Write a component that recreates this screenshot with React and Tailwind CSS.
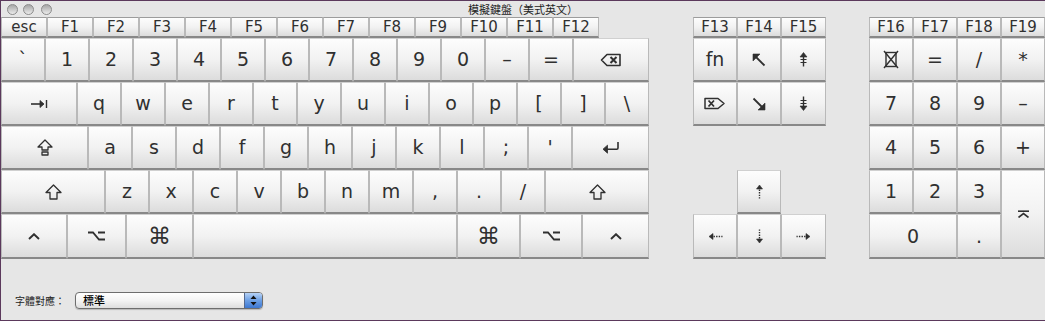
import React from 'react';

const ink = '#303030';

// key glyphs drawn as small svgs
const BackspaceIcon = () => (
  <svg width="22" height="14" viewBox="0 0 22 14" fill="none" stroke={ink}>
    <path d="M1.5 7 7 1.5h13v11H7z" strokeWidth="1.6" strokeLinejoin="round" />
    <path d="m10.5 4 6 6m0-6-6 6" strokeWidth="2" />
  </svg>
);

const TabIcon = () => (
  <svg width="18" height="10" viewBox="0 0 18 10" fill="none" stroke={ink}>
    <path d="M1 5h10" strokeWidth="1.6" />
    <path d="M10 1.5 14 5l-4 3.5z" fill={ink} strokeWidth="0.8" />
    <path d="M16.5 1v8" strokeWidth="1.4" />
  </svg>
);

const CapsIcon = () => (
  <svg width="16" height="17" viewBox="0 0 16 17" fill="none" stroke={ink} strokeWidth="1.3" strokeLinejoin="round">
    <path d="M8 1 15 8h-4v3H5V8H1z" />
    <rect x="5" y="13" width="6" height="3" />
  </svg>
);

const ShiftIcon = () => (
  <svg width="17" height="16" viewBox="0 0 17 16" fill="none" stroke={ink} strokeWidth="1.3" strokeLinejoin="round">
    <path d="M8.5 1 16 8.5h-4V15H5V8.5H1z" />
  </svg>
);

const ReturnIcon = () => (
  <svg width="18" height="13" viewBox="0 0 18 13" fill="none" stroke={ink}>
    <path d="M16 1v6q0 1.2-1.2 1.2H4" strokeWidth="1.6" />
    <path d="M5.5 4.2 1 8.2l4.5 4z" fill={ink} strokeWidth="0.8" strokeLinejoin="round" />
  </svg>
);

const CtrlIcon = () => (
  <svg width="12" height="7" viewBox="0 0 12 7" fill="none" stroke={ink} strokeWidth="1.9">
    <path d="M1 6 6 1.2 11 6" />
  </svg>
);

const OptionIcon = () => (
  <svg width="19" height="10" viewBox="0 0 19 10" fill="none" stroke={ink} strokeWidth="1.8">
    <path d="M1 1.5h5l6 7h6M11 1.5h7" />
  </svg>
);

const HomeIcon = ({ flip = false }) => (
  <svg width="14" height="14" viewBox="0 0 14 14" fill="none" stroke={ink} style={flip ? { transform: 'rotate(180deg)' } : undefined}>
    <path d="M3 3l9.5 9.5" strokeWidth="1.8" />
    <path d="M1 1h7L1 8z" fill={ink} strokeWidth="0.6" />
  </svg>
);

const PageIcon = ({ down = false }) => (
  <svg width="9" height="15" viewBox="0 0 9 15" fill="none" stroke={ink} style={down ? { transform: 'rotate(180deg)' } : undefined}>
    <path d="M4.5 3.5V14.5" strokeWidth="1.4" />
    <path d="M1 5 4.5 0.5 8 5z" fill={ink} strokeWidth="0.6" />
    <path d="M1.5 7.5h6M1.5 10.5h6" strokeWidth="1.2" />
  </svg>
);

const FwdDeleteIcon = () => (
  <svg width="22" height="13" viewBox="0 0 22 13" fill="none" stroke={ink}>
    <path d="M1 1.5h13l6 5-6 5H1z" strokeWidth="1.5" strokeLinejoin="round" />
    <path d="m4.5 3.5 5.5 6m0-6-5.5 6" strokeWidth="1.8" />
  </svg>
);

const ClearIcon = () => (
  <svg width="16" height="19" viewBox="0 0 16 19" fill="none" stroke={ink} strokeWidth="1.4">
    <rect x="3" y="2.5" width="10" height="14" />
    <path d="M1 1l14 17M15 1 1 18" />
  </svg>
);

const ArrowIcon = ({ dir }) => {
  const rot = { up: 0, right: 90, down: 180, left: 270 }[dir];
  return (
    <svg width="15" height="15" viewBox="0 0 15 15" fill="none" stroke={ink} style={{ transform: `rotate(${rot}deg)` }}>
      <path d="M4.5 5 7.5 1l3 4z" fill={ink} strokeWidth="0.6" />
      <path d="M7.5 5.5V14.5" strokeWidth="1.4" strokeDasharray="1.4 1.2" />
    </svg>
  );
};

const EnterIcon = () => (
  <svg width="13" height="8" viewBox="0 0 13 8" fill="none" stroke={ink} strokeWidth="1.6">
    <path d="M1 1.2h11" />
    <path d="M1.5 7.5 6.5 3.6l5 3.9" />
  </svg>
);

const Key = ({ w = 'w-[44px]', fn = false, children, className = '' }) => (
  <div
    className={`${w} h-full shrink-0 box-border flex items-center justify-center border-x border-[#b9b9b9] border-b-2 border-b-[#888888] border-t ${
      fn ? 'border-t-[#9c9c9c] text-[15px]' : 'border-t-[#d0d0d0] text-[19px]'
    } bg-linear-to-b from-[#fdfdfd] via-[#f2f2f2] to-[#dcdcdc] text-[#303030] leading-none ${className}`}
  >
    {children}
  </div>
);

const fnKeys = ['esc', 'F1', 'F2', 'F3', 'F4', 'F5', 'F6', 'F7', 'F8', 'F9', 'F10', 'F11', 'F12'];
const numRow = ['1', '2', '3', '4', '5', '6', '7', '8', '9', '0', '–', '='];
const qRow = ['q', 'w', 'e', 'r', 't', 'y', 'u', 'i', 'o', 'p', '[', ']', '\\'];
const aRow = ['a', 's', 'd', 'f', 'g', 'h', 'j', 'k', 'l', ';', "'"];
const zRow = ['z', 'x', 'c', 'v', 'b', 'n', 'm', ',', '.', '/'];

const App = () => {
  return (
    <div
      className="w-[1045px] h-[321px] box-border border-l border-t border-b border-[#5b395c] bg-[#e6e6e6] flex flex-col overflow-hidden"
      style={{ fontFamily: '"DejaVu Sans", "Noto Sans CJK TC", sans-serif' }}
    >
      {/* Title bar */}
      <div className="h-[16px] shrink-0 grid grid-cols-[1fr_auto_1fr] items-center">
        <div className="flex items-center">
          <span className="ml-[6px] w-[11px] h-[11px] rounded-full border border-[#8c8c8c] bg-linear-to-b from-[#a6a6a6] to-[#ececec]" />
          <span className="ml-[5px] w-[11px] h-[11px] rounded-full border border-[#8c8c8c] bg-linear-to-b from-[#a6a6a6] to-[#ececec]" />
          <span className="ml-[7px] w-[11px] h-[11px] rounded-full border border-[#8c8c8c] bg-linear-to-b from-[#a6a6a6] to-[#ececec]" />
        </div>
        <div
          className="text-[11px] leading-none text-[#1e1e1e] pt-[1px]"
          style={{ fontFamily: '"Noto Sans CJK TC", sans-serif' }}
        >
          模擬鍵盤（美式英文）
        </div>
        <div />
      </div>

      {/* Keyboard */}
      <div className="flex shrink-0">
        {/* Main block */}
        <div className="w-[648px] flex flex-col">
          <div className="h-[21px] flex">
            {fnKeys.map((k) => (
              <Key key={k} w="w-[46px]" fn>{k}</Key>
            ))}
          </div>
          <div className="h-[44px] flex">
            <Key>`</Key>
            {numRow.map((k) => (
              <Key key={k}>{k}</Key>
            ))}
            <Key w="w-[76px]"><BackspaceIcon /></Key>
          </div>
          <div className="h-[44px] flex">
            <Key w="w-[76px]"><TabIcon /></Key>
            {qRow.map((k) => (
              <Key key={k}>{k}</Key>
            ))}
          </div>
          <div className="h-[44px] flex">
            <Key w="w-[87px]"><CapsIcon /></Key>
            {aRow.map((k) => (
              <Key key={k}>{k}</Key>
            ))}
            <Key w="w-[77px]"><ReturnIcon /></Key>
          </div>
          <div className="h-[44px] flex">
            <Key w="w-[104px]"><ShiftIcon /></Key>
            {zRow.map((k) => (
              <Key key={k}>{k}</Key>
            ))}
            <Key w="w-[104px]"><ShiftIcon /></Key>
          </div>
          <div className="h-[45px] flex">
            <Key w="w-[66px]"><CtrlIcon /></Key>
            <Key w="w-[59px]"><OptionIcon /></Key>
            <Key w="w-[67px]" className="text-[23px]">⌘</Key>
            <Key w="w-[264px]" />
            <Key w="w-[63px]" className="text-[23px]">⌘</Key>
            <Key w="w-[62px]"><OptionIcon /></Key>
            <Key w="w-[67px]"><CtrlIcon /></Key>
          </div>
        </div>

        {/* Navigation block */}
        <div className="ml-[44px] w-[133px] grid grid-cols-[44px_44px_45px] grid-rows-[21px_44px_44px_44px_44px_45px]">
          <Key w="w-full" fn>F13</Key>
          <Key w="w-full" fn>F14</Key>
          <Key w="w-full" fn>F15</Key>
          <Key w="w-full">fn</Key>
          <Key w="w-full"><HomeIcon /></Key>
          <Key w="w-full"><PageIcon /></Key>
          <Key w="w-full"><FwdDeleteIcon /></Key>
          <Key w="w-full"><HomeIcon flip /></Key>
          <Key w="w-full"><PageIcon down /></Key>
          <Key w="w-full" className="col-start-2 row-start-5"><ArrowIcon dir="up" /></Key>
          <Key w="w-full" className="col-start-1 row-start-6"><ArrowIcon dir="left" /></Key>
          <Key w="w-full" className="col-start-2 row-start-6"><ArrowIcon dir="down" /></Key>
          <Key w="w-full" className="col-start-3 row-start-6"><ArrowIcon dir="right" /></Key>
        </div>

        {/* Numeric keypad */}
        <div className="ml-[43px] w-[176px] grid grid-cols-[44px_44px_44px_44px] grid-rows-[21px_44px_44px_44px_44px_45px]">
          <Key w="w-full" fn>F16</Key>
          <Key w="w-full" fn>F17</Key>
          <Key w="w-full" fn>F18</Key>
          <Key w="w-full" fn>F19</Key>
          <Key w="w-full"><ClearIcon /></Key>
          <Key w="w-full">=</Key>
          <Key w="w-full">/</Key>
          <Key w="w-full" className="text-[15px]">*</Key>
          <Key w="w-full">7</Key>
          <Key w="w-full">8</Key>
          <Key w="w-full">9</Key>
          <Key w="w-full">–</Key>
          <Key w="w-full">4</Key>
          <Key w="w-full">5</Key>
          <Key w="w-full">6</Key>
          <Key w="w-full">+</Key>
          <Key w="w-full">1</Key>
          <Key w="w-full">2</Key>
          <Key w="w-full">3</Key>
          <Key w="w-full" className="row-span-2"><EnterIcon /></Key>
          <Key w="w-full" className="col-span-2">0</Key>
          <Key w="w-full">.</Key>
        </div>
      </div>

      {/* Font mapping */}
      <div
        className="mt-[33px] pl-[14px] flex items-center"
        style={{ fontFamily: '"Noto Sans CJK TC", sans-serif' }}
      >
        <span className="text-[10px] leading-none text-[#1e1e1e] w-[60px]">字體對應：</span>
        <div className="w-[188px] h-[17px] box-border rounded-[4px] border border-[#6e6e6e] flex overflow-hidden bg-linear-to-b from-white via-[#f4f4f4] to-[#dedede] shadow-[0_1px_1px_rgba(0,0,0,0.2)]">
          <span className="flex-1 pl-[7px] text-[11px] leading-[15px] font-medium text-black">標準</span>
          <span className="w-[18px] h-full border-l border-[#55698f] bg-linear-to-b from-[#b6d2f6] via-[#6c9fe4] to-[#3c77d2] flex items-center justify-center">
            <svg width="7" height="11" viewBox="0 0 7 11" fill="#111">
              <path d="M3.5 0.5 6.5 4h-6zM3.5 10.5 0.5 7h6z" />
            </svg>
          </span>
        </div>
      </div>
    </div>
  );
};

export default App;
